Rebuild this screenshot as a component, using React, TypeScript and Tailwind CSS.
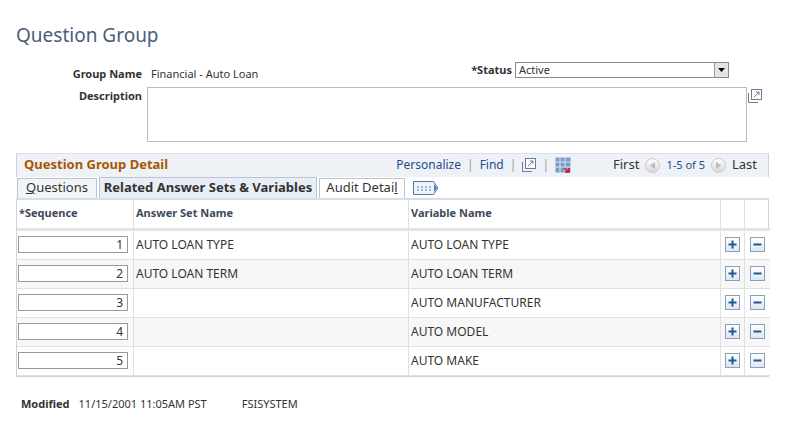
const rows = [
  { seq: 1, ans: 'AUTO LOAN TYPE', v: 'AUTO LOAN TYPE' },
  { seq: 2, ans: 'AUTO LOAN TERM', v: 'AUTO LOAN TERM' },
  { seq: 3, ans: '', v: 'AUTO MANUFACTURER' },
  { seq: 4, ans: '', v: 'AUTO MODEL' },
  { seq: 5, ans: '', v: 'AUTO MAKE' },
];

function PlusBtn({ minus }: { minus?: boolean }) {
  return (
    <div className="w-[15px] h-[15px] border border-[#8aa0b8] bg-gradient-to-b from-white to-[#dfe6ee] flex items-center justify-center">
      <svg width="9" height="9" viewBox="0 0 9 9">
        <rect x="0.5" y="3.5" width="8" height="2" fill="#1f5a96" />
        {!minus && <rect x="3.5" y="0.5" width="2" height="8" fill="#1f5a96" />}
      </svg>
    </div>
  );
}

function PopIcon() {
  return (
    <svg width="14" height="14" viewBox="0 0 14 14">
      <rect x="3.5" y="0.5" width="10" height="10" fill="white" stroke="#6b7d94" />
      <path d="M0.5 4v9.5H10" fill="none" stroke="#6b7d94" />
      <path d="M6 8l5-5M8 3h3v3" fill="none" stroke="#6b7d94" />
    </svg>
  );
}

function NavCircle({ dir }: { dir: 'l' | 'r' }) {
  return (
    <div className="w-[15px] h-[15px] rounded-full bg-gradient-to-b from-white to-[#d8d8d8] border border-[#c8c8c8] flex items-center justify-center">
      <svg width="6" height="7" viewBox="0 0 6 7">
        {dir === 'l' ? <path d="M5 0v7L0 3.5z" fill="#bbb" /> : <path d="M1 0v7l5-3.5z" fill="#bbb" />}
      </svg>
    </div>
  );
}

export default function App() {
  return (
    <div className="w-[797px] h-[434px] bg-white relative font-[family-name:'Liberation_Sans',Arial,sans-serif] text-[12px] text-[#333]">
      <div className="pt-[24px] pl-[16px] text-[19px] text-[#4a5d7d] font-[family-name:'DejaVu_Sans',sans-serif] leading-[22px]">Question Group</div>

      <div className="mt-[16px] flex font-[family-name:'DejaVu_Sans_Condensed','DejaVu_Sans',sans-serif] text-[11px]">
        <div className="w-[142px] text-right font-bold text-[#333] pt-[4px]">Group Name</div>
        <div className="ml-[9px] pt-[4px] w-[313px]">Financial - Auto Loan</div>
        <div className="font-bold w-[48px] text-right">*Status</div>
        <div className="ml-[3px] w-[214px] h-[16px] border border-[#888] flex items-center justify-between pl-[3px]">
          <span>Active</span>
          <div className="w-[14px] h-[14px] bg-[#e4e4e4] border-l border-[#999] flex items-center justify-center">
            <svg width="7" height="4" viewBox="0 0 7 4"><path d="M0 0h7L3.5 4z" fill="#000" /></svg>
          </div>
        </div>
      </div>

      <div className="mt-[4px] flex font-[family-name:'DejaVu_Sans_Condensed','DejaVu_Sans',sans-serif] text-[11px]">
        <div className="w-[142px] text-right font-bold pt-[1px]">Description</div>
        <div className="ml-[5px] w-[600px] h-[55px] border border-[#bbb]" />
        <div className="ml-[1px] mt-[2px]"><PopIcon /></div>
      </div>

      <div className="ml-[16px] mt-[11px] w-[753px] border border-[#c9d4de] border-t-[#d8dfe6]">
        <div className="h-[23px] bg-[#eef2f6] flex items-center px-[7px]">
          <span className="font-bold text-[13px] text-[#a65700]">Question Group Detail</span>
          <div className="ml-auto flex items-center gap-[6px] text-[12px] text-[#1f4f8c]">
            <span>Personalize</span><span className="text-[#999]">|</span>
            <span>Find</span><span className="text-[#999]">|</span>
            <PopIcon /><span className="text-[#999]">|</span>
            <svg width="16" height="16" viewBox="0 0 16 16">
              <rect x="0.5" y="0.5" width="15" height="15" fill="#7a9dc8" />
              <path d="M0 5h16M0 10h16M5 0v16M10 0v16" stroke="#dbe6f3" />
              <path d="M9 11l5 4M14 11v4h-4" stroke="#c21a1a" strokeWidth="1.5" fill="none" />
            </svg>
            <span className="ml-[36px] text-[#333] text-[13px]">First</span>
            <NavCircle dir="l" />
            <span className="text-[#1f4f8c] text-[11px]">1-5 of 5</span>
            <NavCircle dir="r" />
            <span className="text-[#333] text-[13px] mr-[4px]">Last</span>
          </div>
        </div>
        <div className="h-[23px] flex items-end bg-white border-b-[2px] border-[#d6dfe8] -mx-px pl-px">
          <div className="h-[20px] w-[80px] border border-b-0 border-[#b8c4d0] bg-[#f2f5f8] flex items-center justify-center text-[13px] text-[#333]"><span><u>Q</u>uestions</span></div>
          <div className="h-[21px] ml-[2px] w-[218px] border border-b-0 border-[#b8c4d0] bg-[#e8eef5] flex items-center justify-center font-bold text-[13px] text-[#333]">Related Answer Sets &amp; Variables</div>
          <div className="h-[20px] ml-[2px] w-[86px] border border-b-0 border-[#b8c4d0] bg-white flex items-center justify-center text-[13px]"><span>Audit Detai<u>l</u></span></div>
          <div className="h-[20px] ml-[8px] flex items-center">
            <svg width="26" height="14" viewBox="0 0 26 14">
              <path d="M0.5 0.5h20l4.5 6.5-4.5 6.5h-20z" fill="#eef3fa" stroke="#4a78b0" />
              <path d="M21 3l3 4-3 4z" fill="#4a78b0" />
              <path d="M4 6h2M8 6h2M12 6h2M16 6h2M4 9h2M8 9h2M12 9h2M16 9h2" stroke="#4a78b0" />
            </svg>
          </div>
        </div>
        <div className="grid grid-cols-[117px_275px_312px_24px_25px] text-[11px]">
          {['*Sequence', 'Answer Set Name', 'Variable Name', '', ''].map((h, i) => (
            <div key={i} className={`h-[31px] flex items-center px-[2px] font-bold text-[#3c4a5c] border-b-[3px] border-[#e4e4e4] ${i < 4 ? 'border-r border-r-[#e0e0e0]' : ''}`}>{h}</div>
          ))}
          {rows.map((r, ri) => {
            const bg = ri % 2 === 1 ? 'bg-[#f7f7f7]' : 'bg-white';
            const cell = `h-[29px] flex items-center border-b border-[#e0e0e0] ${bg}`;
            return [
              <div key={`a${ri}`} className={`${cell} border-r border-r-[#e0e0e0] pl-[1px]`}>
                <div className="w-[110px] h-[17px] border border-[#999] bg-white text-right pr-[4px] text-[12px] leading-[15px]">{r.seq}</div>
              </div>,
              <div key={`b${ri}`} className={`${cell} border-r border-r-[#e0e0e0] pl-[2px] text-[12px]`}>{r.ans}</div>,
              <div key={`c${ri}`} className={`${cell} border-r border-r-[#e0e0e0] pl-[2px] text-[12px]`}>{r.v}</div>,
              <div key={`d${ri}`} className={`${cell} border-r border-r-[#e0e0e0] justify-center`}><PlusBtn /></div>,
              <div key={`e${ri}`} className={`${cell} justify-center`}><PlusBtn minus /></div>,
            ];
          })}
        </div>
      </div>

      <div className="mt-[19px] ml-[21px] flex font-[family-name:'DejaVu_Sans',sans-serif] text-[11px] text-[#333]">
        <span className="font-bold">Modified</span>
        <span className="ml-[9px]">11/15/2001 11:05AM PST</span>
        <span className="ml-[35px]">FSISYSTEM</span>
      </div>
    </div>
  );
}
